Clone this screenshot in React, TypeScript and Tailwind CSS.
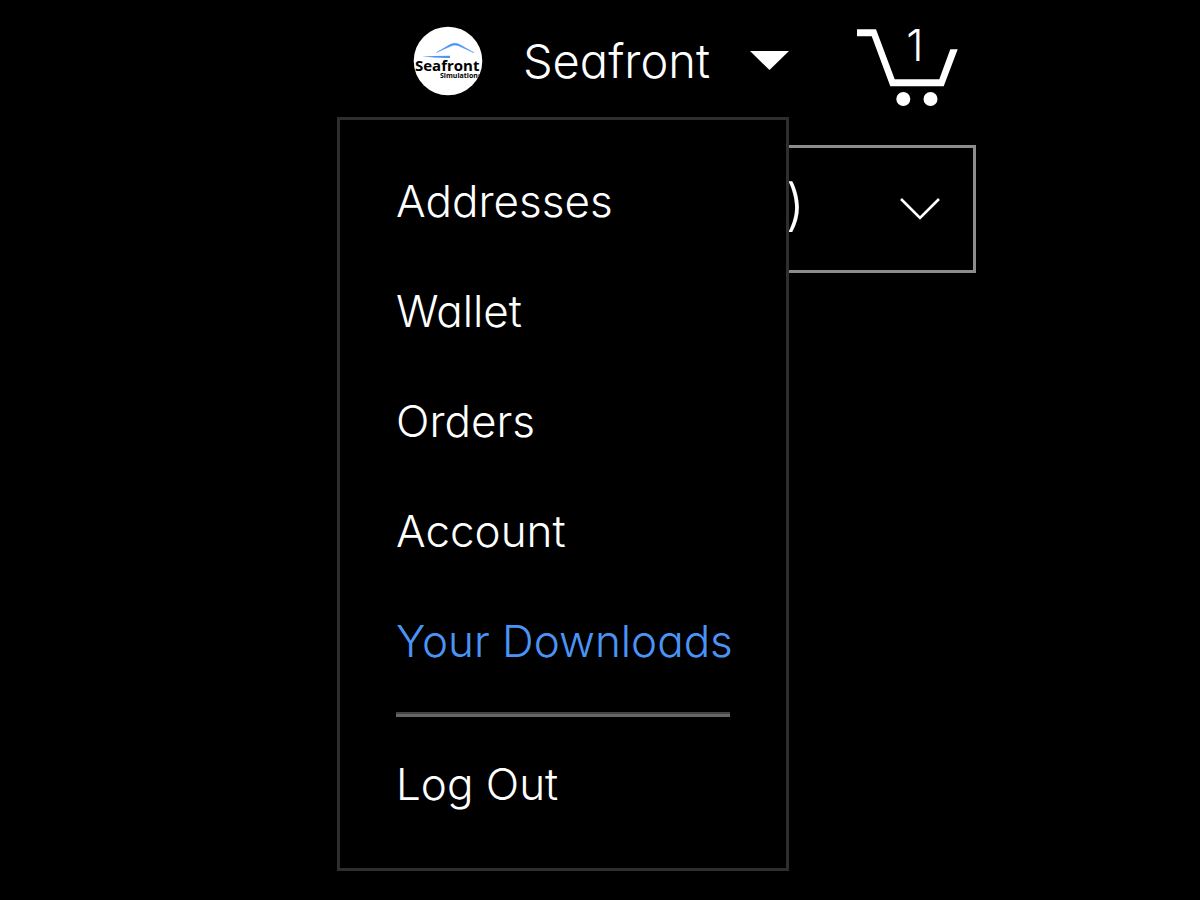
import { useState } from 'react'

const menuItems = [
  { name: 'Addresses', href: '#addresses' },
  { name: 'Wallet', href: '#wallet' },
  { name: 'Orders', href: '#orders' },
  { name: 'Account', href: '#account' },
  { name: 'Your Downloads', href: '#downloads', active: true },
]

function Logo() {
  return (
    <svg className="w-[70px] h-[70px] shrink-0" viewBox="0 0 70 70" aria-hidden="true">
      <defs>
        <clipPath id="logo-circle">
          <circle cx="35" cy="35" r="34.3" />
        </clipPath>
      </defs>
      <g clipPath="url(#logo-circle)">
        <rect width="70" height="70" fill="#fff" />
        <path d="M23.5 26.5 L37 18.6 Q42 16 46 18.2 L61 26.7 L45.5 19.8 Q41.5 18.2 38 20 Z" fill="#4a94f5" stroke="#4a94f5" strokeWidth=".5" />
        <path d="M9 30.6 Q20 29.8 37 29.8 V32 Q22 32.2 9 30.6 Z" fill="#4a94f5" />
        <text fontFamily="Open Sans, sans-serif" fontWeight="700">
          <tspan x="2" y="45" fontSize="15">Seafront</tspan>
          <tspan x="27" y="52" fontSize="7">Simulations</tspan>
        </text>
      </g>
    </svg>
  )
}

function CartIcon({ count }: { count: number }) {
  return (
    <svg className="w-[102px] h-[80px] overflow-visible" viewBox="0 0 102 80" aria-hidden="true">
      <path d="M0 1.3 H19 L37.7 51.3 H82.3 L93.3 21.3 H100.7 L86.7 58.3 H33.3 L14.7 8.3 H0 Z" fill="#fff" />
      <circle cx="46.3" cy="71" r="7" fill="#fff" />
      <circle cx="73.5" cy="71" r="7" fill="#fff" />
      <text x="58" y="33" fill="#fff" fontSize="44" textAnchor="middle">{count}</text>
    </svg>
  )
}

export default function App() {
  const [open, setOpen] = useState(true)
  const [currency, setCurrency] = useState('USD')

  return (
    <div className="min-h-screen bg-black text-white font-light font-['Inter',sans-serif] [font-feature-settings:'cv11'] pl-[338px] pr-[224px]">
      <header className="flex justify-end gap-[68px] pr-[17px]">
        {/* Account */}
        <div className="relative">
          <button
            type="button"
            aria-expanded={open}
            onClick={() => setOpen(!open)}
            className="flex items-center gap-10 h-[117px] pt-1"
          >
            <Logo />
            <span className="text-[47px] leading-[56px]">Seafront</span>
            <svg className="w-[39px] h-[19px]" viewBox="0 0 39 19" aria-hidden="true">
              <path d="M0 0 H39 L19.5 19 Z" fill="#fff" />
            </svg>
          </button>

          {open && (
            <nav className="absolute top-full right-0 z-10 w-[452px] bg-black border-[3px] border-[#2e2e2e] px-14 pt-[26px] pb-[29px]">
              {menuItems.map((item) => (
                <a
                  key={item.name}
                  href={item.href}
                  className={`flex items-center h-[110px] text-[44px] leading-[56px] whitespace-nowrap ${
                    item.active ? 'text-[#4a94f5]' : 'text-white'
                  }`}
                >
                  {item.name}
                </a>
              ))}
              <hr className="mt-4 mb-3 h-[5px] border-0 border-t-2 border-[#444] bg-[#666]" />
              <button type="button" className="flex items-center w-full h-[110px] text-[44px] leading-[56px]">
                Log Out
              </button>
            </nav>
          )}
        </div>

        {/* Cart */}
        <a href="#cart" aria-label="Cart" className="pt-7">
          <CartIcon count={1} />
        </a>
      </header>

      {/* Currency */}
      <div className="relative mt-7">
        <select
          aria-label="Currency"
          value={currency}
          onChange={(e) => setCurrency(e.target.value)}
          className="block appearance-none w-full h-32 border-[3px] border-[#8c8c8c] bg-black text-[56px] text-right [text-align-last:right] pr-[168px] pb-1"
        >
          <option value="USD">USD ($)</option>
        </select>
        <svg className="absolute right-9 top-1/2 -translate-y-1/2 w-10 h-[22px] pointer-events-none" viewBox="0 0 40 22" aria-hidden="true">
          <path d="M1 1 L20 20 L39 1" fill="none" stroke="#fff" strokeWidth="2.6" />
        </svg>
      </div>
    </div>
  )
}
